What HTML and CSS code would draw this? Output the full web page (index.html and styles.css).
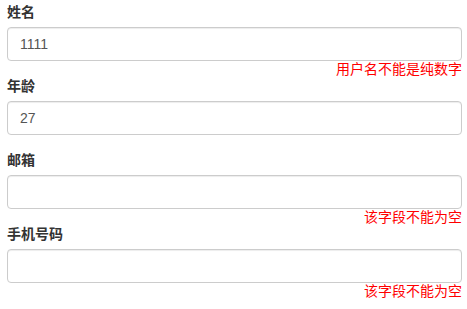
FILE: index.html
```html
<!DOCTYPE html>
<html lang="zh">
<head>
<meta charset="utf-8">
<link rel="stylesheet" href="styles.css">
</head>
<body>
<form class="form">
  <div class="form-group">
    <label class="label">姓名</label>
    <div class="field">
      <input class="input" type="text" value="1111">
      <span class="error">用户名不能是纯数字</span>
    </div>
  </div>
  <div class="form-group">
    <label class="label">年龄</label>
    <div class="field">
      <input class="input" type="text" value="27">
    </div>
  </div>
  <div class="form-group">
    <label class="label">邮箱</label>
    <div class="field">
      <input class="input" type="text" value="">
      <span class="error">该字段不能为空</span>
    </div>
  </div>
  <div class="form-group">
    <label class="label">手机号码</label>
    <div class="field">
      <input class="input" type="text" value="">
      <span class="error">该字段不能为空</span>
    </div>
  </div>
</form>
</body>
</html>
```

FILE: styles.css
```css
html, body {
  margin: 0;
  padding: 0;
  background: #fff;
}
body {
  font-family: "Liberation Sans", Arial, "Noto Sans CJK SC", sans-serif;
  font-size: 14px;
  line-height: 20px;
  color: #333;
}
.form {
  margin: 0;
  padding: 2px 5px 0 7px;
}
.form-group {
  display: flex;
  flex-direction: column;
  align-items: flex-start;
  margin-bottom: 15px;
}
.label {
  display: inline-block;
  font-weight: bold;
  margin-bottom: 5px;
  line-height: 20px;
}
.field {
  position: relative;
  align-self: stretch;
}
.input {
  display: block;
  box-sizing: border-box;
  width: 100%;
  height: 34px;
  margin: 0;
  padding: 6px 12px;
  font-family: "Liberation Sans", Arial, "Noto Sans CJK SC", sans-serif;
  font-size: 14px;
  line-height: 20px;
  color: #555;
  background: #fff;
  border: 1px solid #ccc;
  border-radius: 4px;
  box-shadow: inset 0 1px 1px rgba(0,0,0,0.075);
  outline: none;
}
.error {
  position: absolute;
  right: 0;
  top: 100%;
  color: #f00;
  font-size: 14px;
  line-height: 17px;
  white-space: nowrap;
}
```
